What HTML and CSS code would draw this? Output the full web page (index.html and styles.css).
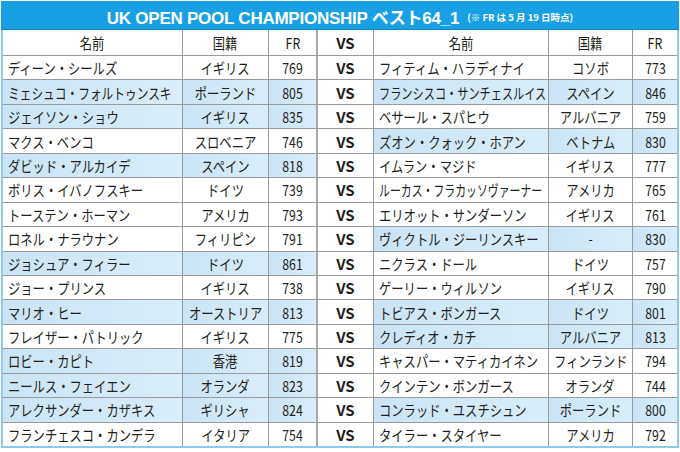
FILE: index.html
```html
<!DOCTYPE html>
<html lang="ja">
<head>
<meta charset="utf-8">
<title>UK OPEN POOL CHAMPIONSHIP ベスト64_1</title>
<link rel="stylesheet" href="styles.css">
</head>
<body>
<div class="board">
  <div class="title">
    <span class="title-main">UK OPEN POOL CHAMPIONSHIP ベスト64_1</span>
    <span class="title-note">(※ FR は 5 月 19 日時点)</span>
  </div>
  <div class="table">
    <div class="row head">
      <div class="cell"><span class="tx">名前</span></div>
      <div class="cell"><span class="tx">国籍</span></div>
      <div class="cell"><span class="tx">FR</span></div>
      <div class="cell vs">VS</div>
      <div class="cell"><span class="tx">名前</span></div>
      <div class="cell"><span class="tx">国籍</span></div>
      <div class="cell"><span class="tx">FR</span></div>
    </div>

    <div class="row">
      <div class="cell nm"><span class="tx">ディーン・シールズ</span></div>
      <div class="cell"><span class="tx">イギリス</span></div>
      <div class="cell"><span class="tx">769</span></div>
      <div class="cell vs">VS</div>
      <div class="cell nm"><span class="tx">フィティム・ハラディナイ</span></div>
      <div class="cell"><span class="tx">コソボ</span></div>
      <div class="cell"><span class="tx">773</span></div>
    </div>

    <div class="row">
      <div class="cell nm hl"><span class="tx s78">ミェシュコ・フォルトゥンスキ</span></div>
      <div class="cell hl"><span class="tx">ポーランド</span></div>
      <div class="cell hl"><span class="tx">805</span></div>
      <div class="cell vs">VS</div>
      <div class="cell nm hl"><span class="tx s745">フランシスコ・サンチェスルイス</span></div>
      <div class="cell hl"><span class="tx">スペイン</span></div>
      <div class="cell hl"><span class="tx">846</span></div>
    </div>

    <div class="row">
      <div class="cell nm hl"><span class="tx">ジェイソン・ショウ</span></div>
      <div class="cell hl"><span class="tx">イギリス</span></div>
      <div class="cell hl"><span class="tx">835</span></div>
      <div class="cell vs">VS</div>
      <div class="cell nm"><span class="tx">ベサール・スパヒウ</span></div>
      <div class="cell"><span class="tx">アルバニア</span></div>
      <div class="cell"><span class="tx">759</span></div>
    </div>

    <div class="row">
      <div class="cell nm"><span class="tx">マクス・ベンコ</span></div>
      <div class="cell"><span class="tx">スロベニア</span></div>
      <div class="cell"><span class="tx">746</span></div>
      <div class="cell vs">VS</div>
      <div class="cell nm hl"><span class="tx">ズオン・クォック・ホアン</span></div>
      <div class="cell hl"><span class="tx">ベトナム</span></div>
      <div class="cell hl"><span class="tx">830</span></div>
    </div>

    <div class="row">
      <div class="cell nm hl"><span class="tx">ダビッド・アルカイデ</span></div>
      <div class="cell hl"><span class="tx">スペイン</span></div>
      <div class="cell hl"><span class="tx">818</span></div>
      <div class="cell vs">VS</div>
      <div class="cell nm"><span class="tx">イムラン・マジド</span></div>
      <div class="cell"><span class="tx">イギリス</span></div>
      <div class="cell"><span class="tx">777</span></div>
    </div>

    <div class="row">
      <div class="cell nm"><span class="tx">ボリス・イバノフスキー</span></div>
      <div class="cell"><span class="tx">ドイツ</span></div>
      <div class="cell"><span class="tx">739</span></div>
      <div class="cell vs">VS</div>
      <div class="cell nm"><span class="tx s72">ルーカス・フラカッソヴァーナー</span></div>
      <div class="cell"><span class="tx">アメリカ</span></div>
      <div class="cell"><span class="tx">765</span></div>
    </div>

    <div class="row">
      <div class="cell nm"><span class="tx">トーステン・ホーマン</span></div>
      <div class="cell"><span class="tx">アメリカ</span></div>
      <div class="cell"><span class="tx">793</span></div>
      <div class="cell vs">VS</div>
      <div class="cell nm"><span class="tx">エリオット・サンダーソン</span></div>
      <div class="cell"><span class="tx">イギリス</span></div>
      <div class="cell"><span class="tx">761</span></div>
    </div>

    <div class="row">
      <div class="cell nm"><span class="tx">ロネル・ナラウナン</span></div>
      <div class="cell"><span class="tx">フィリピン</span></div>
      <div class="cell"><span class="tx">791</span></div>
      <div class="cell vs">VS</div>
      <div class="cell nm hl"><span class="tx">ヴィクトル・ジーリンスキー</span></div>
      <div class="cell hl"><span class="tx">-</span></div>
      <div class="cell hl"><span class="tx">830</span></div>
    </div>

    <div class="row">
      <div class="cell nm hl"><span class="tx">ジョシュア・フィラー</span></div>
      <div class="cell hl"><span class="tx">ドイツ</span></div>
      <div class="cell hl"><span class="tx">861</span></div>
      <div class="cell vs">VS</div>
      <div class="cell nm"><span class="tx">ニクラス・ドール</span></div>
      <div class="cell"><span class="tx">ドイツ</span></div>
      <div class="cell"><span class="tx">757</span></div>
    </div>

    <div class="row">
      <div class="cell nm"><span class="tx">ジョー・プリンス</span></div>
      <div class="cell"><span class="tx">イギリス</span></div>
      <div class="cell"><span class="tx">738</span></div>
      <div class="cell vs">VS</div>
      <div class="cell nm"><span class="tx">ゲーリー・ウィルソン</span></div>
      <div class="cell"><span class="tx">イギリス</span></div>
      <div class="cell"><span class="tx">790</span></div>
    </div>

    <div class="row">
      <div class="cell nm hl"><span class="tx">マリオ・ヒー</span></div>
      <div class="cell hl"><span class="tx">オーストリア</span></div>
      <div class="cell hl"><span class="tx">813</span></div>
      <div class="cell vs">VS</div>
      <div class="cell nm hl"><span class="tx">トビアス・ボンガース</span></div>
      <div class="cell hl"><span class="tx">ドイツ</span></div>
      <div class="cell hl"><span class="tx">801</span></div>
    </div>

    <div class="row">
      <div class="cell nm"><span class="tx">フレイザー・パトリック</span></div>
      <div class="cell"><span class="tx">イギリス</span></div>
      <div class="cell"><span class="tx">775</span></div>
      <div class="cell vs">VS</div>
      <div class="cell nm hl"><span class="tx">クレディオ・カチ</span></div>
      <div class="cell hl"><span class="tx">アルバニア</span></div>
      <div class="cell hl"><span class="tx">813</span></div>
    </div>

    <div class="row">
      <div class="cell nm hl"><span class="tx">ロビー・カピト</span></div>
      <div class="cell hl"><span class="tx">香港</span></div>
      <div class="cell hl"><span class="tx">819</span></div>
      <div class="cell vs">VS</div>
      <div class="cell nm"><span class="tx">キャスパー・マティカイネン</span></div>
      <div class="cell"><span class="tx">フィンランド</span></div>
      <div class="cell"><span class="tx">794</span></div>
    </div>

    <div class="row">
      <div class="cell nm hl"><span class="tx">ニールス・フェイエン</span></div>
      <div class="cell hl"><span class="tx">オランダ</span></div>
      <div class="cell hl"><span class="tx">823</span></div>
      <div class="cell vs">VS</div>
      <div class="cell nm"><span class="tx">クインテン・ボンガース</span></div>
      <div class="cell"><span class="tx">オランダ</span></div>
      <div class="cell"><span class="tx">744</span></div>
    </div>

    <div class="row">
      <div class="cell nm hl"><span class="tx">アレクサンダー・カザキス</span></div>
      <div class="cell hl"><span class="tx">ギリシャ</span></div>
      <div class="cell hl"><span class="tx">824</span></div>
      <div class="cell vs">VS</div>
      <div class="cell nm hl"><span class="tx">コンラッド・ユスチシュン</span></div>
      <div class="cell hl"><span class="tx">ポーランド</span></div>
      <div class="cell hl"><span class="tx">800</span></div>
    </div>

    <div class="row">
      <div class="cell nm"><span class="tx">フランチェスコ・カンデラ</span></div>
      <div class="cell"><span class="tx">イタリア</span></div>
      <div class="cell"><span class="tx">754</span></div>
      <div class="cell vs">VS</div>
      <div class="cell nm"><span class="tx">タイラー・スタイヤー</span></div>
      <div class="cell"><span class="tx">アメリカ</span></div>
      <div class="cell"><span class="tx">792</span></div>
    </div>
  </div>
</div>
</body>
</html>
```
FILE: styles.css
```css
body {
  margin: 0;
  background: #ffffff;
  font-family: "Noto Sans CJK JP", sans-serif;
  color: #231f20;
}

.board {
  width: 678px;
  margin: 1px 0 0 1px;
}

.title {
  box-sizing: border-box;
  height: 29px;
  padding-top: 3px;
  background: #17a1e4;
  border-bottom: 1px solid #1682c3;
  display: flex;
  justify-content: center;
  align-items: center;
  color: #ffffff;
}

.title-main {
  font-family: "Liberation Sans", "Noto Sans CJK JP", sans-serif;
  font-weight: bold;
  font-size: 17px;
  letter-spacing: -0.25px;
  white-space: nowrap;
}

.title-note {
  font-family: "Noto Sans CJK JP", sans-serif;
  font-weight: bold;
  font-size: 9.5px;
  margin-left: 8px;
  white-space: nowrap;
}

.table {
  border: 2px solid #8ecaec;
  border-top: 0;
}

.row {
  box-sizing: border-box;
  display: grid;
  grid-template-columns: 179px 86px 48px 57px 175px 84px 45px;
  height: 24.45px;
}

.row.head {
  height: 25px;
}

.row + .row {
  border-top: 1px solid #9a9a9a;
}

.cell {
  box-sizing: border-box;
  display: flex;
  align-items: center;
  justify-content: center;
  border-left: 1px solid #9a9a9a;
  font-size: 15px;
  line-height: 1;
  white-space: nowrap;
}

.cell:first-child {
  border-left: 0;
}

.nm {
  justify-content: flex-start;
  padding-left: 5px;
}

.vs {
  border-left: 2px solid #a8a8a8;
  font-weight: bold;
  font-size: 15px;
}

.hl {
  background: linear-gradient(to right, #cbe4f5, #d9edf9);
}

.tx {
  display: inline-block;
  transform: scaleX(0.82);
  transform-origin: center;
}

.nm .tx {
  transform-origin: left center;
}

.tx.s78 { transform: scaleX(0.78); }
.tx.s745 { transform: scaleX(0.745); }
.tx.s72 { transform: scaleX(0.725); }
```
